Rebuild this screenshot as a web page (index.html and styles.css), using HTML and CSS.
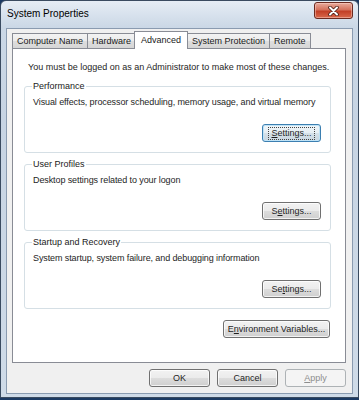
FILE: index.html
```html
<!DOCTYPE html>
<html lang="en">
<head>
    <meta charset="UTF-8">
    <title>System Properties</title>
    <link rel="stylesheet" href="styles.css">
</head>
<body>

<div class="window">
    <div class="titlebar">
        <span class="title">System Properties</span>
        <button class="close" aria-label="Close">
            <svg width="11" height="10" viewBox="0 0 11 10">
                <path d="M2 1.5 L9 8.5 M9 1.5 L2 8.5" stroke="#4a1e16" stroke-width="3.6" stroke-linecap="round"/>
                <path d="M2 1.5 L9 8.5 M9 1.5 L2 8.5" stroke="#fff" stroke-width="2" stroke-linecap="round"/>
            </svg>
        </button>
    </div>

    <div class="client">
        <div class="tabs">
            <span class="tab">Computer Name</span>
            <span class="tab">Hardware</span>
            <span class="tab selected">Advanced</span>
            <span class="tab">System Protection</span>
            <span class="tab">Remote</span>
        </div>

        <div class="panel">
            <p class="note">You must be logged on as an Administrator to make most of these changes.</p>

            <fieldset class="group">
                <legend>Performance</legend>
                <p class="desc">Visual effects, processor scheduling, memory usage, and virtual memory</p>
                <div class="actions">
                    <button class="btn settings default"><span class="focus"><u>S</u>ettings...</span></button>
                </div>
            </fieldset>

            <fieldset class="group">
                <legend>User Profiles</legend>
                <p class="desc">Desktop settings related to your logon</p>
                <div class="actions">
                    <button class="btn settings">S<u>e</u>ttings...</button>
                </div>
            </fieldset>

            <fieldset class="group">
                <legend>Startup and Recovery</legend>
                <p class="desc">System startup, system failure, and debugging information</p>
                <div class="actions">
                    <button class="btn settings">Se<u>t</u>tings...</button>
                </div>
            </fieldset>

            <div class="actions env-row">
                <button class="btn env">E<u>n</u>vironment Variables...</button>
            </div>
        </div>

        <div class="footer">
            <button class="btn dialog">OK</button>
            <button class="btn dialog">Cancel</button>
            <button class="btn dialog" disabled><u>A</u>pply</button>
        </div>
    </div>
</div>

</body>
</html>
```

FILE: styles.css
```css
* {
    box-sizing: border-box;
}
body {
    margin: 0;
    background: #1c3a63;
    font-family: "Liberation Sans", Arial, sans-serif;
    font-size: 9px;
    line-height: 12px;
    color: #1e1e1e;
}
.window {
    width: 359px;
    height: 398px;
    display: flex;
    flex-direction: column;
    padding: 0 5px 3px;
    border: 1px solid #3a4b60;
    border-radius: 6px 6px 0 0;
    background: linear-gradient(#e6edf5, #cbd8e6 26px, #c7d4e3 120px, #cfdbe8);
}
.titlebar {
    height: 27px;
    display: flex;
    align-items: flex-start;
}
.title {
    font-size: 10px;
    padding: 7px 0 0 1px;
    color: #000;
}
.close {
    margin: 1px 0 0 auto;
    width: 39px;
    height: 17px;
    padding: 0;
    display: flex;
    align-items: center;
    justify-content: center;
    border: 1px solid #6b2a20;
    border-radius: 3px;
    background: linear-gradient(#e9ab9c, #d5725d 45%, #c23f26 55%, #d9684b);
    box-shadow: inset 0 0 0 1px rgba(255, 220, 210, 0.45);
}
.client {
    flex: 1;
    display: flex;
    flex-direction: column;
    padding: 2px 6px 0 5px;
    background: #f0f0f0;
    border: 1px solid #8a9bb0;
}

/* tab strip */
.tabs {
    display: flex;
    align-items: flex-end;
    height: 17px;
    position: relative;
    z-index: 1;
}
.tab {
    height: 15px;
    padding: 0 4px;
    line-height: 14px;
    color: #1a1a1a;
    border: 1px solid #898c95;
    border-bottom: none;
    border-left: none;
    background: linear-gradient(#f3f3f3, #ebebeb 50%, #dedede 50%, #d6d6d6);
}
.tab:first-child {
    border-left: 1px solid #898c95;
}
.tab.selected {
    height: 18px;
    margin: 0 -2px -1px -2px;
    padding: 0 6px;
    line-height: 16px;
    border-left: 1px solid #898c95;
    background: #fff;
    position: relative;
}
.tab.selected + .tab {
    padding-left: 6px;
}
.panel {
    height: 315px;
    padding: 0 14px 0 11px;
    background: #fff;
    border: 1px solid #898c95;
}
.note {
    margin: 12px 0 0 4px;
}

/* group boxes */
.group {
    margin: 7px 0 0;
    padding: 0 9px 10px 7px;
    border: 1px solid #d5dfe5;
    border-radius: 3px;
}
.group + .group {
    margin-top: 5px;
}
.group legend {
    padding: 0 1px;
    color: #1a1a1a;
}
.desc {
    margin: 4px 0 0 1px;
    white-space: nowrap;
    letter-spacing: -0.1px;
}
.actions {
    display: flex;
    justify-content: flex-end;
    margin-top: 16px;
}

/* push buttons */
.btn {
    height: 18px;
    padding: 0;
    font: inherit;
    color: #1e1e1e;
    border: 1px solid #707070;
    border-radius: 3px;
    background: linear-gradient(#f2f2f2, #ebebeb 50%, #dddddd 50%, #cfcfcf);
    box-shadow: inset 0 0 0 1px rgba(255, 255, 255, 0.75);
}
.btn.settings {
    width: 59px;
}
.btn.default {
    border-color: #3c7fb1;
    box-shadow: inset 0 0 0 1px #bfe3f7;
    background: linear-gradient(#f0f6fa, #e6eef3 50%, #d6e2ea 50%, #c8d6e0);
}
.btn .focus {
    padding: 0 2px 1px;
    outline: 1px dotted #444;
}
.env-row {
    margin-top: 11px;
}
.btn.env {
    width: 107px;
    margin-right: 1px;
}
.footer {
    display: flex;
    justify-content: flex-end;
    gap: 7px;
    margin-top: 6px;
}
.btn.dialog {
    width: 61px;
}
.btn:disabled {
    color: #8d8d8d;
    border-color: #adb2b5;
    background: #f4f4f4;
    box-shadow: none;
}
```
